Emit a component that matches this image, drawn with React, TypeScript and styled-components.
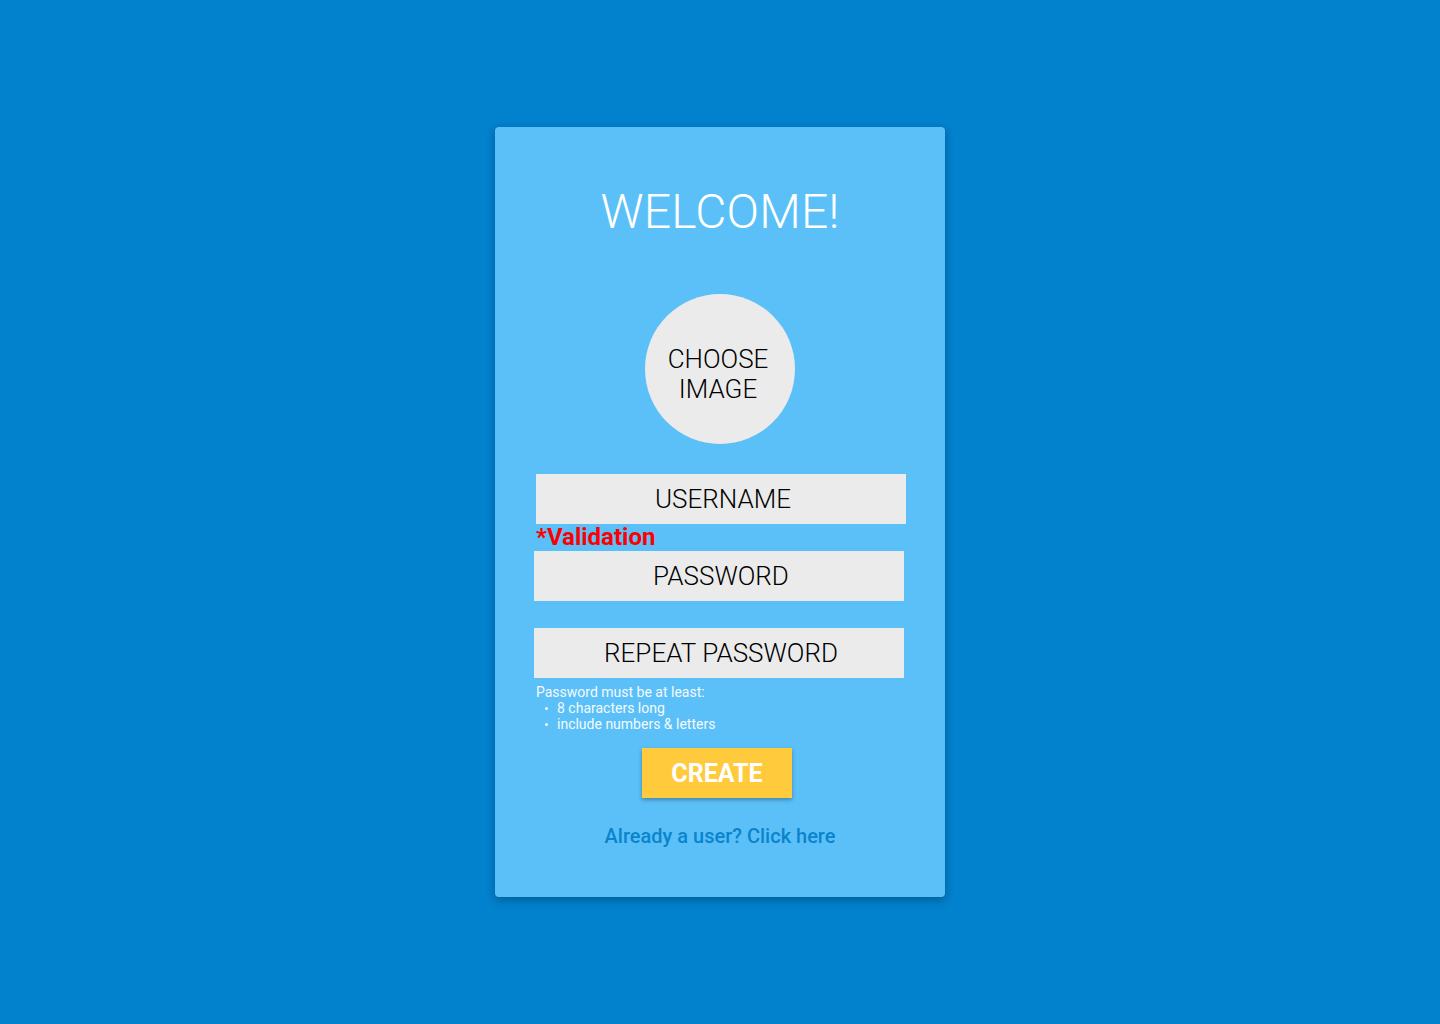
import React from "react";
import styled, { createGlobalStyle } from "styled-components";

const GlobalStyle = createGlobalStyle`
  html, body {
    margin: 0;
    padding: 0;
    background: #0281cc;
    font-family: Roboto, "Liberation Sans", Arial, sans-serif;
  }
  * { box-sizing: border-box; }
`;

const Page = styled.main`
  width: 1440px;
  height: 1024px;
  display: flex;
  justify-content: center;
  align-items: flex-start;
  padding-top: 127px;
  background: #0281cc;
`;

const Card = styled.section`
  width: 450px;
  height: 770px;
  background: #5bc0f8;
  border-radius: 4px;
  box-shadow: 0 3px 8px rgba(0, 0, 0, 0.28);
  display: flex;
  flex-direction: column;
  align-items: center;
  padding-top: 57px;
`;

const Title = styled.h1`
  margin: 0;
  font-family: Roboto, sans-serif;
  font-weight: 300;
  font-size: 48px;
  line-height: 56px;
  color: #ffffff;
  letter-spacing: 0.2px;
`;

const Avatar = styled.button`
  margin-top: 54px;
  width: 150px;
  height: 150px;
  border-radius: 50%;
  border: none;
  background: #ebebeb;
  display: flex;
  align-items: center;
  justify-content: center;
  font-family: Roboto, sans-serif;
  font-weight: 300;
  font-size: 26px;
  line-height: 30px;
  color: #000000;
  text-align: center;
  padding: 10px 4px 0 0;
  cursor: pointer;
`;

const Form = styled.div`
  margin-top: 30px;
  width: 372px;
  display: flex;
  flex-direction: column;
  align-items: flex-start;
`;

const Field = styled.div<{ $shift?: number; $gap?: number }>`
  width: 370px;
  height: 50px;
  margin-left: ${(p) => p.$shift ?? 0}px;
  margin-top: ${(p) => p.$gap ?? 0}px;
  padding-left: 4px;
  background: #ebebeb;
  display: flex;
  align-items: center;
  justify-content: center;
  font-family: Roboto, sans-serif;
  font-weight: 300;
  font-size: 26px;
  color: #000000;
`;

const Validation = styled.div`
  padding-left: 2px;
  height: 27px;
  font-family: Roboto, sans-serif;
  font-weight: 700;
  font-size: 24px;
  line-height: 27px;
  color: #ff0000;
`;

const Hint = styled.div`
  margin-top: 6px;
  padding-left: 2px;
  font-family: Roboto, sans-serif;
  font-weight: 400;
  font-size: 14px;
  line-height: 16px;
  color: #f4faff;
`;

const HintList = styled.ul`
  margin: 0;
  padding: 0 0 0 9px;
  list-style: none;
`;

const HintItem = styled.li`
  display: flex;
  align-items: center;
  &::before {
    content: "";
    width: 3px;
    height: 3px;
    border-radius: 50%;
    background: #f4faff;
    margin-right: 9px;
    margin-top: 1px;
  }
`;

const CreateButton = styled.button`
  margin-top: 16px;
  margin-right: 6px;
  width: 150px;
  height: 50px;
  border: none;
  background: #ffca3c;
  box-shadow: 0 2px 4px rgba(0, 0, 0, 0.3);
  font-family: Roboto, sans-serif;
  font-weight: 700;
  font-size: 25px;
  color: #ffffff;
  padding: 0;
  cursor: pointer;
`;

const SignInLink = styled.a`
  margin-top: 26px;
  font-family: Roboto, sans-serif;
  font-weight: 500;
  font-size: 20px;
  line-height: 24px;
  color: #0a84cc;
  text-decoration: none;
  cursor: pointer;
`;

export default function App() {
  return (
    <>
      <GlobalStyle />
      <Page>
        <Card>
          <Title>WELCOME!</Title>
          <Avatar>
            CHOOSE
            <br />
            IMAGE
          </Avatar>
          <Form>
            <Field $shift={2}>USERNAME</Field>
            <Validation>*Validation</Validation>
            <Field>PASSWORD</Field>
            <Field $gap={27}>REPEAT PASSWORD</Field>
            <Hint>
              Password must be at least:
              <HintList>
                <HintItem>8 characters long</HintItem>
                <HintItem>include numbers &amp; letters</HintItem>
              </HintList>
            </Hint>
          </Form>
          <CreateButton>CREATE</CreateButton>
          <SignInLink>Already a user? Click here</SignInLink>
        </Card>
      </Page>
    </>
  );
}
